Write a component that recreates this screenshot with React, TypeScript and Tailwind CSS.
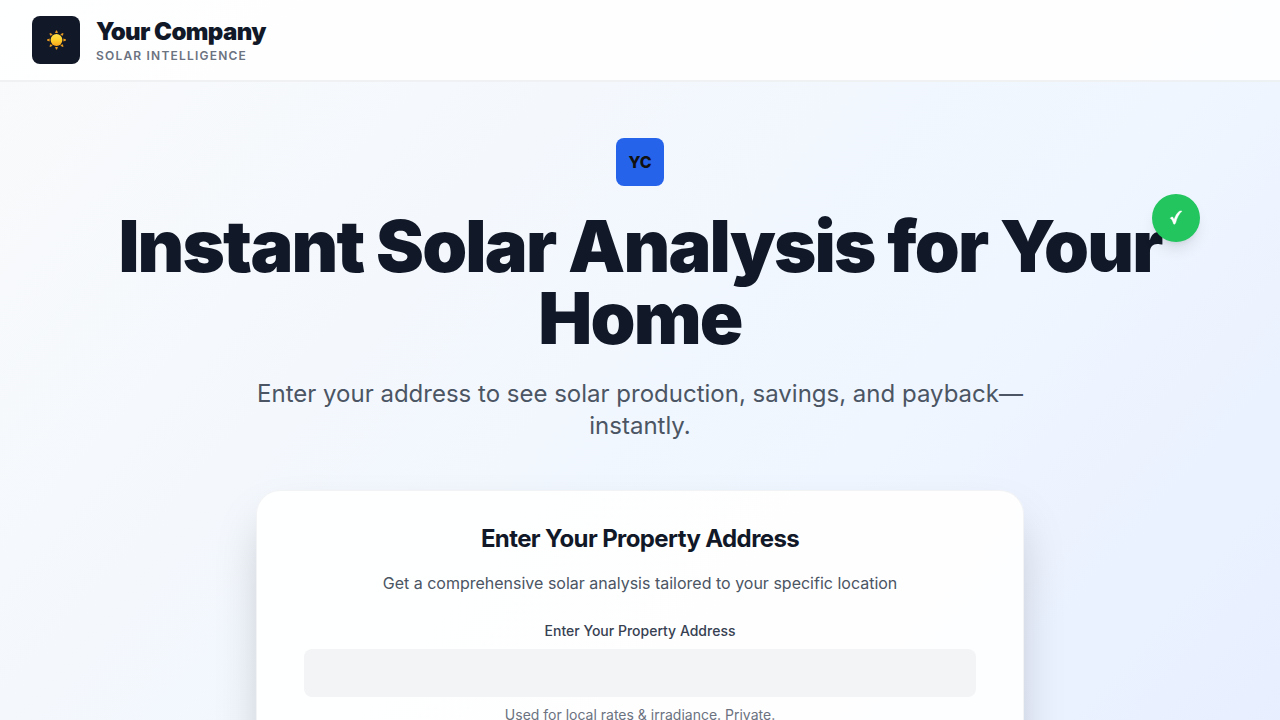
function SunIcon() {
  const angles = [0, 45, 90, 135, 180, 225, 270, 315];
  return (
    <svg width="20" height="20" viewBox="0 0 20 20" aria-hidden="true">
      <defs>
        <linearGradient id="sun" x1="0" y1="0" x2="0" y2="1">
          <stop offset="0" stopColor="#ffe04a" />
          <stop offset="0.5" stopColor="#ffd02c" />
          <stop offset="1" stopColor="#f9a51c" />
        </linearGradient>
      </defs>
      {angles.map((a) => (
        <path
          key={a}
          d="M9.1 3.1 L10 0.5 H11 L11.9 3.1 Z"
          fill="#e79a20"
          transform={`rotate(${a} 10.5 10)`}
        />
      ))}
      <circle cx="10.5" cy="10" r="5.9" fill="url(#sun)" />
    </svg>
  );
}

function CheckIcon() {
  return (
    <svg width="14" height="16" viewBox="0 0 14 16" aria-hidden="true">
      <path
        d="M1.2 8.2 C2 7 3.4 6.7 4 7.4 C4.5 8 4.8 8.8 5.1 9.6 C6.3 6 8.1 2.8 10.4 1.3 C11.3 0.8 12.2 0.8 13 1.1 C10 3.8 8 7.8 6.7 12.7 C6.4 14 5.2 14.6 4.6 13.9 C3.9 12.3 3.3 9.2 1.2 8.2 Z"
        fill="white"
        stroke="white"
        strokeWidth="0.4"
      />
    </svg>
  );
}

function Header() {
  return (
    <header className="border-b-2 border-gray-200/60 bg-white/90">
      <div className="flex h-20 items-center gap-4 px-8">
        <div className="flex size-12 items-center justify-center rounded-lg bg-[#111827]">
          <SunIcon />
        </div>
        <div>
          <p className="text-2xl font-black tracking-tight text-[#111827]">Your Company</p>
          <p className="text-xs font-semibold tracking-widest text-[#6b7280] uppercase">
            Solar Intelligence
          </p>
        </div>
      </div>
    </header>
  );
}

function AddressCard() {
  return (
    <section className="mx-auto mt-12 w-full max-w-3xl rounded-3xl border border-gray-200/50 bg-white/90 px-12 pt-8 pb-96 shadow-2xl">
      <div className="-mx-px">
        <h2 className="text-2xl font-bold tracking-tight text-[#111827]">
          Enter Your Property Address
        </h2>
        <p className="mt-4 text-base text-[#4b5563]">
          Get a comprehensive solar analysis tailored to your specific location
        </p>
        <label htmlFor="address" className="mt-6 block pt-0.5 text-sm font-medium text-[#374151]">
          Enter Your Property Address
        </label>
        <input
          id="address"
          type="text"
          className="mt-2 block h-12 w-full rounded-lg bg-[#f3f4f6] px-4 text-base text-[#111827]"
        />
        <p className="mt-2 text-sm text-[#6b7280]">Used for local rates &amp; irradiance. Private.</p>
      </div>
    </section>
  );
}

export default function App() {
  return (
    <div className="min-h-screen bg-linear-to-br/srgb from-[#f9fafb] via-[#eff6ff] to-[#e0e7ff] font-[Inter,'Liberation_Sans',sans-serif] antialiased">
      <Header />
      <main className="relative mx-auto max-w-7xl px-8 pt-14 pb-80 text-center">
        <div className="mx-auto flex size-12 items-center justify-center rounded-lg bg-[#2563eb] font-extrabold text-[#111111]">
          YC
        </div>
        <h1 className="mt-6 text-7xl leading-none font-black tracking-tight text-[#111827]">
          Instant Solar Analysis for Your Home
        </h1>
        <div className="absolute top-28 right-20 flex size-12 items-center justify-center rounded-full bg-[#22c55e] shadow-lg">
          <CheckIcon />
        </div>
        <p className="mx-auto mt-6 max-w-3xl text-2xl text-[#4b5563]">
          Enter your address to see solar production, savings, and payback—instantly.
        </p>
        <AddressCard />
      </main>
    </div>
  );
}
